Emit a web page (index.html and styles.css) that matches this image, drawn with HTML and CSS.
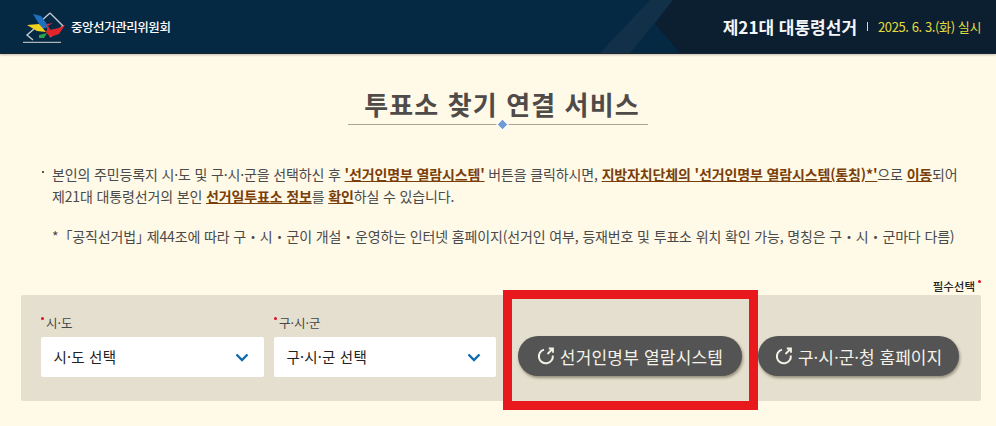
FILE: index.html
```html
<!DOCTYPE html>
<html lang="ko">
<head>
  <meta charset="UTF-8">
  <title>투표소 찾기 연결 서비스</title>
  <link rel="stylesheet" href="styles.css">
</head>
<body>
  <header class="top">
    <a class="org">
      <svg class="logo" width="42" height="32" viewBox="0 0 42 32">
        <path d="M27 2 L40 15 L27 26 M11 18 L4 24 L10 29" fill="none" stroke="#c3c9cf" stroke-width="1.4"/>
        <path d="M27 2 L17 11" fill="none" stroke="#c3c9cf" stroke-width="1.4"/>
        <path d="M0 31.5 H38" stroke="#aeb4ba" stroke-width="1.4"/>
        <path d="M10 3 L18 5 L26 16 L19 18 Z" fill="#1e6fc0"/>
        <path d="M4 14 L16 13 L23 21 L14 20 Z" fill="#f2d21c"/>
        <path d="M24 13 L30 12 L23 16 Z M22 20 L36 17 L42 14 L36 23 L27 26 Z" fill="#e0262c"/>
        <path d="M24 14 L29 21 L24 22 Z" fill="#e0262c"/>
        <path d="M16 24 L24 22 L21 27 L16 27 Z" fill="#2ea24a"/>
      </svg>
      <span class="org-name">중앙선거관리위원회</span>
    </a>
    <div class="election">
      <strong>제21대 대통령선거</strong>
      <i class="sep"></i>
      <span class="date">2025. 6. 3.(화) 실시</span>
    </div>
  </header>

  <main class="content">
    <div class="title-wrap">
      <h1>투표소 찾기 연결 서비스</h1>
      <div class="title-line"><i></i></div>
    </div>

    <div class="notice">
      <p class="bullet">본인의 주민등록지 시·도 및 구·시·군을 선택하신 후 <b>'선거인명부 열람시스템'</b> 버튼을 클릭하시면, <b>지방자치단체의 '선거인명부 열람시스템(통칭)*'</b>으로 <b>이동</b>되어<br>제21대 대통령선거의 본인 <b>선거일투표소 정보</b>를 <b>확인</b>하실 수 있습니다.</p>
      <p class="foot">*「공직선거법<span class="tight">」</span> 제44조에 따라 구・시・군이 개설・운영하는 인터넷 홈페이지(선거인 여부, 등재번호 및 투표소 위치 확인 가능, 명칭은 구・시・군마다 다름)</p>
    </div>

    <div class="required">필수선택<em></em></div>

    <section class="panel">
      <div class="field">
        <label><em></em>시·도</label>
        <div class="select">시·도 선택
          <svg width="14" height="9" viewBox="0 0 14 9"><path d="M1.5 1.5 L7 7 L12.5 1.5" fill="none" stroke="#0f6ba8" stroke-width="2.4"/></svg>
        </div>
      </div>
      <div class="field">
        <label><em></em>구·시·군</label>
        <div class="select">구·시·군 선택
          <svg width="14" height="9" viewBox="0 0 14 9"><path d="M1.5 1.5 L7 7 L12.5 1.5" fill="none" stroke="#0f6ba8" stroke-width="2.4"/></svg>
        </div>
      </div>
      <button class="btn btn-first">
        <svg width="18" height="18" viewBox="0 0 18 18"><path d="M7 2.6 A7 7 0 1 0 15.8 8.5" fill="none" stroke="#f4f1e6" stroke-width="2"/><path d="M10.5 7 L15.5 2 M11.8 1.5 H16 V5.8" fill="none" stroke="#f4f1e6" stroke-width="1.8"/></svg>
        선거인명부 열람시스템
      </button>
      <button class="btn btn-second">
        <svg width="18" height="18" viewBox="0 0 18 18"><path d="M7 2.6 A7 7 0 1 0 15.8 8.5" fill="none" stroke="#f4f1e6" stroke-width="2"/><path d="M10.5 7 L15.5 2 M11.8 1.5 H16 V5.8" fill="none" stroke="#f4f1e6" stroke-width="1.8"/></svg>
        구·시·군·청 홈페이지
      </button>
    </section>
  </main>

  <div class="highlight"></div>
</body>
</html>
```

FILE: styles.css
```css
* {
  box-sizing: border-box;
}

html, body {
  margin: 0;
  height: 426px;
  overflow: hidden;
}

body {
  position: relative;
  background: #fff9e8;
  font-family: "Noto Sans CJK KR", "Noto Sans", sans-serif;
  color: #4a4a4a;
}

.top {
  position: relative;
  height: 54px;
  padding: 0 15px 0 23px;
  display: flex;
  align-items: center;
  justify-content: space-between;
  background: #062943;
  border-bottom: 1px solid #1c2630;
  box-shadow: 0 1px 2px rgba(0,0,0,0.25);
}

/* diagonal band and dark right side of the header */
.top::before {
  content: "";
  position: absolute;
  left: 600px;
  top: 0;
  width: 73px;
  height: 53px;
  background: #123149;
  clip-path: polygon(0 100%, 30px 100%, 100% 0, 50px 0);
}

.top::after {
  content: "";
  position: absolute;
  left: 655px;
  right: 0;
  top: 0;
  height: 53px;
  background: #0c1f30;
  clip-path: polygon(18px 0, 100% 0, 100% 100%, 25px 100%, 0 24px);
}

.org, .election {
  position: relative;
  z-index: 1;
}

.org {
  display: flex;
  align-items: center;
  gap: 6px;
}

.org-name {
  color: #fff;
  font-size: 12.5px;
  font-weight: 500;
  letter-spacing: -0.45px;
}

.election {
  display: flex;
  align-items: center;
}

.election strong {
  color: #f4f6f8;
  font-size: 17px;
  font-weight: 700;
}

.sep {
  width: 1px;
  height: 9px;
  margin: 0 10px 0 10px;
  background: #d8d8c8;
}

.date {
  color: #e3dc3c;
  font-size: 13px;
  letter-spacing: -0.4px;
}

.content {
  padding: 0 15px 0 21px;
}

.title-wrap {
  width: 300px;
  margin: 32px auto 0 327px;
  text-align: center;
}

h1 {
  margin: 0;
  height: 38px;
  padding-left: 8px;
  font-size: 26px;
  line-height: 35px;
  font-weight: 700;
  letter-spacing: 1.1px;
  color: #4f4b48;
}

.title-line {
  position: relative;
  height: 1px;
  background: #a8a498;
}

.title-line i {
  position: absolute;
  left: 151px;
  top: -3px;
  width: 7px;
  height: 7px;
  background: #6e9bd6;
  outline: 1px solid #fff;
  transform: rotate(45deg);
}

.notice {
  margin-top: 38px;
  padding-left: 31px;
  font-size: 14px;
  line-height: 22px;
  letter-spacing: -0.14px;
  white-space: nowrap;
}

.notice p {
  margin: 0;
}

.bullet {
  position: relative;
}

.bullet::before {
  content: "";
  position: absolute;
  left: -10px;
  top: 8px;
  width: 2px;
  height: 2px;
  background: #555;
}

.notice b {
  color: #7a3f08;
  font-weight: 700;
  text-decoration: underline;
}

.notice .foot {
  margin-top: 18px;
}

.tight {
  letter-spacing: -7px;
}

.required {
  margin: 32px 0 2px 0;
  text-align: right;
  font-size: 11.5px;
  line-height: 14px;
  font-weight: 500;
  color: #222;
}

.required em {
  margin-left: 3px;
}

.required em, .field label em {
  display: inline-block;
  width: 3px;
  height: 3px;
  border-radius: 50%;
  background: #d8121f;
  vertical-align: 8px;
}

.panel {
  width: 960px;
  height: 106px;
  padding: 20px 22px 0 20px;
  display: flex;
  align-items: flex-start;
  background: #e5dfcf;
  border-radius: 2px;
}

.field {
  width: 223px;
  margin-right: 10px;
}

.field + .field {
  width: 222px;
  margin-right: 22px;
}

.field label {
  display: block;
  height: 22px;
  font-size: 12.5px;
  line-height: 16px;
  color: #45484a;
}

.field label em {
  margin-right: 2px;
}

.select {
  height: 40px;
  padding: 0 15px 0 12.5px;
  display: flex;
  align-items: center;
  justify-content: space-between;
  background: #fff;
  border-radius: 2px;
  font-size: 14.5px;
  line-height: 38px;
  letter-spacing: 0.2px;
  color: #222;
}

.btn {
  height: 40px;
  margin-top: 21px;
  padding: 0;
  display: flex;
  align-items: center;
  justify-content: center;
  gap: 5px;
  border: 0;
  border-radius: 20px;
  background: #545454;
  box-shadow: 1px 2px 3px rgba(70,60,40,0.5);
  font-family: inherit;
  font-size: 17px;
  letter-spacing: 0.2px;
  color: #f5f2e8;
}

.btn-first {
  width: 224px;
  margin-right: 16px;
}

.btn-second {
  width: 201px;
  letter-spacing: 0;
}

.highlight {
  position: absolute;
  left: 503px;
  top: 290px;
  width: 255px;
  height: 120px;
  border: 9px solid #e8181d;
}
```
